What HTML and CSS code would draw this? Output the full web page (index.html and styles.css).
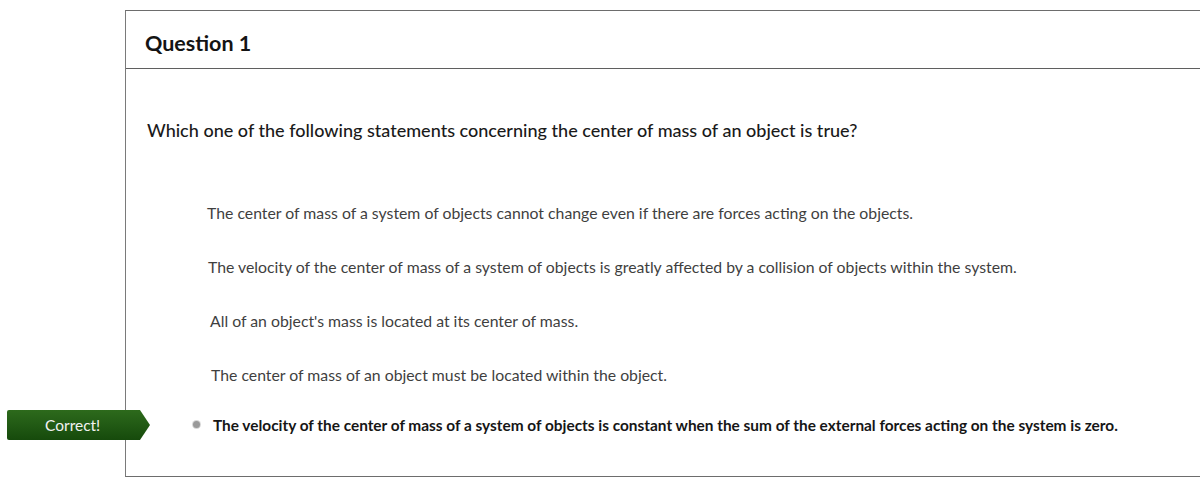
FILE: index.html
```
<!DOCTYPE html>
<html>
<head>
<meta charset="utf-8">
<link rel="stylesheet" href="styles.css">
</head>
<body>
<div class="page">
  <div class="quiz">
    <div class="q-header">
      <h2 class="q-title">Question 1</h2>
    </div>
    <div class="q-body">
      <p class="q-text">Which one of the following statements concerning the center of mass of an object is true?</p>
      <ul class="answers">
        <li class="answer">The center of mass of a system of objects cannot change even if there are forces acting on the objects.</li>
        <li class="answer">The velocity of the center of mass of a system of objects is greatly affected by a collision of objects within the system.</li>
        <li class="answer">All of an object's mass is located at its center of mass.</li>
        <li class="answer">The center of mass of an object must be located within the object.</li>
        <li class="answer correct"><span class="radio"></span>The velocity of the center of mass of a system of objects is constant when the sum of the external forces acting on the system is zero.</li>
      </ul>
    </div>
    <div class="badge">Correct!</div>
  </div>
</div>
</body>
</html>
```
FILE: styles.css
```
html, body {
  margin: 0;
  padding: 0;
  background: #ffffff;
}
body {
  font-family: Lato, "Open Sans", sans-serif;
  color: #1c1c1c;
}
.page {
  padding-top: 10px;
  padding-left: 125px;
  height: 481px;
}
.quiz {
  border-top: 1px solid #6d6d6d;
  border-left: 1px solid #7a7a7a;
  border-bottom: 1px solid #6d6d6d;
  height: 465px;
}
.q-header {
  height: 57px;
  border-bottom: 1px solid #5f5f5f;
  display: flex;
  align-items: center;
  padding-left: 19px;
}
.q-title {
  margin: 0;
  font-size: 21.5px;
  font-weight: 700;
  color: #141414;
  padding-top: 6px;
}
.q-body {
  padding-left: 21px;
}
.q-text {
  margin: 49px 0 0 0;
  font-size: 18.05px;
  font-weight: 500;
  color: #1a1a1a;
  line-height: 24px;
}
.answers {
  list-style: none;
  margin: 61px 0 0 0;
  padding: 0 0 0 60px;
  display: flex;
  flex-direction: column;
  gap: 35px;
}
.answer {
  font-size: 15.8px;
  line-height: 19px;
  color: #3f3f3f;
  position: relative;
}
.answer:nth-child(2) { padding-left: 1px; }
.answer:nth-child(3) { padding-left: 3px; }
.answer:nth-child(4) { padding-left: 4px; }
.answer.correct {
  font-weight: 700;
  color: #161616;
  padding-left: 6px;
  font-size: 15.4px;
  margin-top: -3px;
}
.radio {
  position: absolute;
  left: -14px;
  top: 5px;
  width: 7px;
  height: 7px;
  border-radius: 50%;
  background: #9a9a9a;
  box-shadow: 0 0 0 1px #d8d8d8;
}
.badge {
  position: absolute;
  left: 7px;
  top: 410px;
  width: 143px;
  height: 30px;
  background: linear-gradient(#2d6a1c, #164a0c);
  clip-path: polygon(0 0, 93% 0, 100% 50%, 93% 100%, 0 100%);
  color: #f2f2f2;
  font-size: 15.5px;
  line-height: 30px;
  padding-left: 38px;
  box-sizing: border-box;
  border-radius: 2px;
}
```
